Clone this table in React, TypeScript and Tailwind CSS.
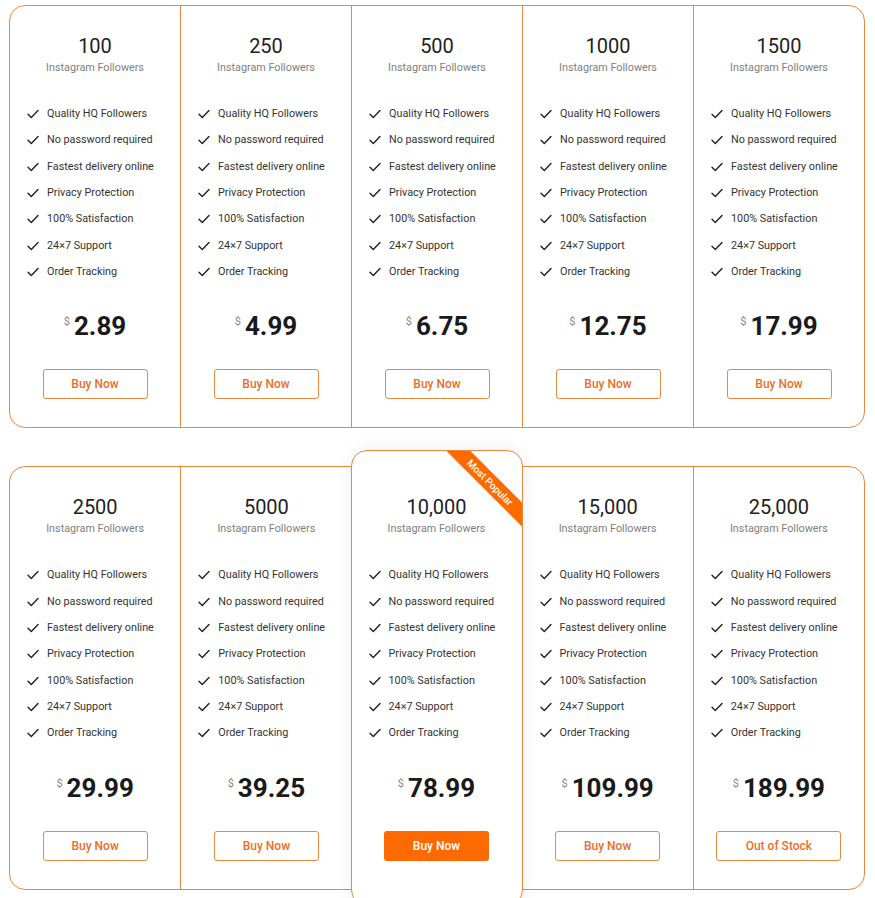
import { Fragment } from 'react';

type Plan = {
  qty: string;
  price: string;
  popular?: boolean;
  soldOut?: boolean;
};

const FEATURES = [
  'Quality HQ Followers',
  'No password required',
  'Fastest delivery online',
  'Privacy Protection',
  '100% Satisfaction',
  '24×7 Support',
  'Order Tracking',
];

const ROWS: Plan[][] = [
  [
    { qty: '100', price: '2.89' },
    { qty: '250', price: '4.99' },
    { qty: '500', price: '6.75' },
    { qty: '1000', price: '12.75' },
    { qty: '1500', price: '17.99' },
  ],
  [
    { qty: '2500', price: '29.99' },
    { qty: '5000', price: '39.25' },
    { qty: '10,000', price: '78.99', popular: true },
    { qty: '15,000', price: '109.99' },
    { qty: '25,000', price: '189.99', soldOut: true },
  ],
];

const CheckIcon = () => (
  <svg aria-hidden viewBox="0 0 12 10" className="h-[10px] w-[12px] shrink-0" fill="none" stroke="#222" strokeWidth="1.4" strokeLinecap="round" strokeLinejoin="round">
    <path d="M1 5.2l3.3 3.3L11 1.4" />
  </svg>
);

const PlanBody = ({ plan }: { plan: Plan }) => (
  <>
    <div className="text-center text-[20px] leading-[24px] text-[#222]">{plan.qty}</div>
    <div className="mt-[2px] text-center text-[10.8px] leading-[16px] text-[#808080]">Instagram Followers</div>

    <ul className="mt-[25px] pl-[17px]">
      {FEATURES.map(f => (
        <li key={f} className="flex h-[26.33px] items-center gap-[8px] text-[10.8px] text-[#333]">
          <CheckIcon />
          <span>{f}</span>
        </li>
      ))}
    </ul>

    <div className="mt-[25px] flex h-[32px] items-start justify-center">
      <span className="mr-[4px] mt-[6px] text-[11px] leading-none text-[#888]">$</span>
      <span className="text-[26px] font-bold leading-[32px] text-[#1a1a1a]">{plan.price}</span>
    </div>

    <div className="mt-[27px] flex justify-center">
      <button
        type="button"
        className={
          plan.popular
            ? 'h-[30px] w-[105px] rounded-[3px] bg-[#ff6a00] text-[12px] font-medium text-white'
            : plan.soldOut
              ? 'h-[30px] w-[125px] rounded-[3px] border border-[#e8893d] bg-white text-[12px] font-medium text-[#ef6d1f]'
              : 'h-[30px] w-[105px] rounded-[3px] border border-[#e8893d] bg-white text-[12px] font-medium text-[#ef6d1f]'
        }
      >
        {plan.soldOut ? 'Out of Stock' : 'Buy Now'}
      </button>
    </div>
  </>
);

export default function App() {
  return (
    <div className="min-h-screen bg-white pl-[9px] pt-[5px]" style={{ fontFamily: 'Roboto, "Liberation Sans", sans-serif' }}>
      <div className="flex w-[856px] flex-col gap-[38px]">
        {ROWS.map((row, ri) => (
          <div key={ri} className="flex rounded-[16px] border border-[#e8893d] bg-white">
            {row.map((plan, i) => {
              const prevPopular = i > 0 && row[i - 1].popular;
              if (plan.popular) {
                return (
                  <div
                    key={plan.qty}
                    className="relative z-10 -my-[17px] -ml-px w-[172px] shrink-0 rounded-[16px] border border-[#e8893d] bg-white pb-[44px] pt-[44px] shadow-[0_0_18px_rgba(0,0,0,0.07)]"
                  >
                    <div className="absolute right-0 top-0 h-[80px] w-[80px] overflow-hidden rounded-tr-[16px]">
                      <div className="absolute left-[-12px] top-[23px] flex h-[17px] w-[120px] rotate-45 items-center justify-center bg-[#ff6a00] text-[10px] font-medium text-white">
                        Most Popular
                      </div>
                    </div>
                    <PlanBody plan={plan} />
                  </div>
                );
              }
              return (
                <Fragment key={plan.qty}>
                  <div className={`flex-1 pb-[28px] pt-[28px] ${i > 0 && !prevPopular ? 'border-l border-[#e8893d]' : ''}`}>
                    <PlanBody plan={plan} />
                  </div>
                </Fragment>
              );
            })}
          </div>
        ))}
      </div>
    </div>
  );
}
